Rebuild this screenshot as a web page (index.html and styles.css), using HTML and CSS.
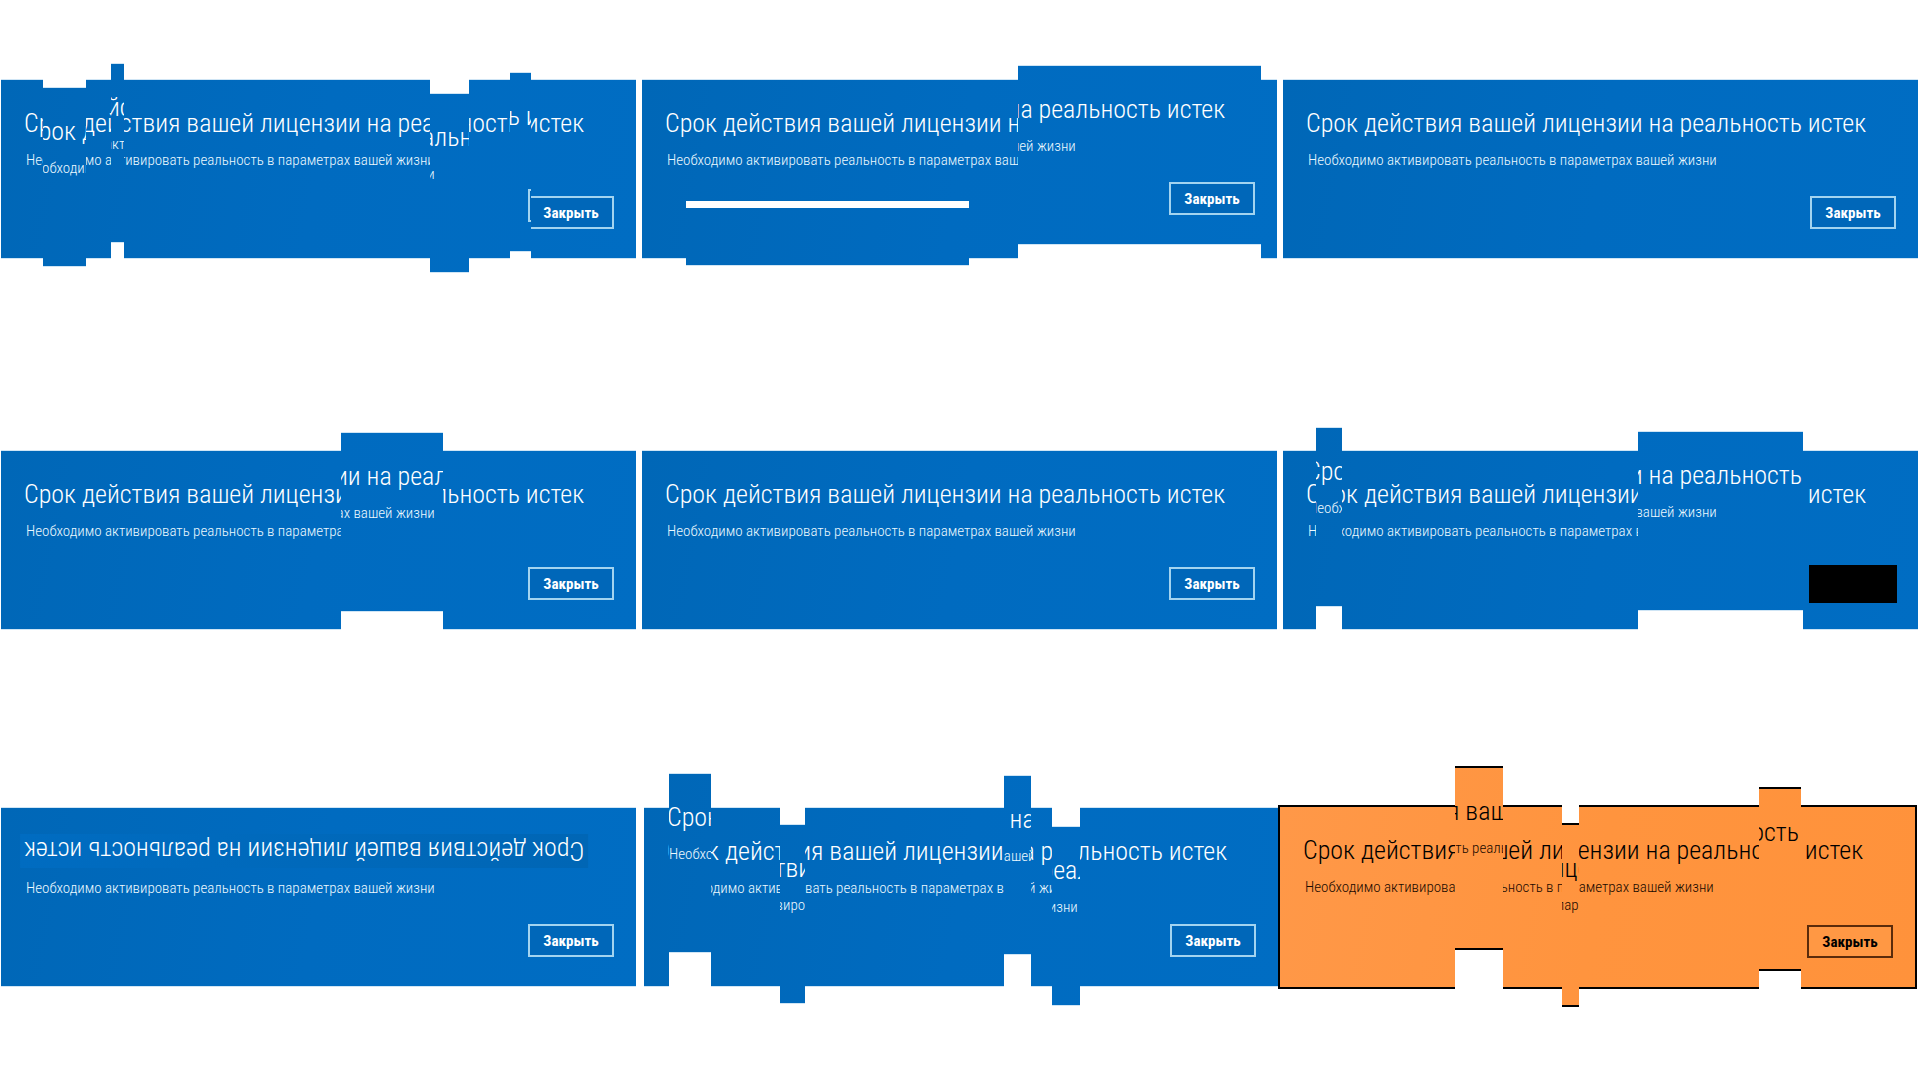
FILE: index.html
```html
<!DOCTYPE html>
<html lang="ru">
<head>
<meta charset="utf-8">
<title>Срок действия вашей лицензии на реальность истек</title>
<link rel="stylesheet" href="styles.css">
</head>
<body>
<main class="wall">
  <section class="row">
    <div class="dialog" data-slices="42,85,8 110,123,-16 429,468,14 509,530,-7">
      <article class="card"><h2 class="title">Срок действия вашей лицензии на реальность истек</h2><p class="note">Необходимо активировать реальность в параметрах вашей жизни</p><button class="close" type="button">Закрыть</button></article>
    </div>
    <div class="dialog" data-slices="44,327,7,122 376,619,-14">
      <article class="card"><h2 class="title">Срок действия вашей лицензии на реальность истек</h2><p class="note">Необходимо активировать реальность в параметрах вашей жизни</p><button class="close" type="button">Закрыть</button></article>
    </div>
    <div class="dialog">
      <article class="card"><h2 class="title">Срок действия вашей лицензии на реальность истек</h2><p class="note">Необходимо активировать реальность в параметрах вашей жизни</p><button class="close" type="button">Закрыть</button></article>
    </div>
  </section>
  <section class="row">
    <div class="dialog" data-slices="340,442,-18">
      <article class="card"><h2 class="title">Срок действия вашей лицензии на реальность истек</h2><p class="note">Необходимо активировать реальность в параметрах вашей жизни</p><button class="close" type="button">Закрыть</button></article>
    </div>
    <div class="dialog">
      <article class="card"><h2 class="title">Срок действия вашей лицензии на реальность истек</h2><p class="note">Необходимо активировать реальность в параметрах вашей жизни</p><button class="close" type="button">Закрыть</button></article>
    </div>
    <div class="dialog" data-slices="33,59,-23 355,520,-19">
      <article class="card"><h2 class="title">Срок действия вашей лицензии на реальность истек</h2><p class="note">Необходимо активировать реальность в параметрах вашей жизни</p><button class="close blackout" type="button" aria-label="Закрыть"></button></article>
    </div>
  </section>
  <section class="row row-last">
    <div class="dialog">
      <article class="card"><h2 class="title upside-down">Срок действия вашей лицензии на реальность истек</h2><p class="note">Необходимо активировать реальность в параметрах вашей жизни</p><button class="close" type="button">Закрыть</button></article>
    </div>
    <div class="dialog" data-slices="25,67,-34 136,161,17 360,387,-32 408,436,19">
      <article class="card"><h2 class="title">Срок действия вашей лицензии на реальность истек</h2><p class="note">Необходимо активировать реальность в параметрах вашей жизни</p><button class="close" type="button">Закрыть</button></article>
    </div>
    <div class="dialog" data-slices="177,225,-39 284,301,18 481,523,-18">
      <article class="card inverted"><h2 class="title">Срок действия вашей лицензии на реальность истек</h2><p class="note">Необходимо активировать реальность в параметрах вашей жизни</p><button class="close" type="button">Закрыть</button></article>
    </div>
  </section>
</main>
<script src="slices.js"></script>
</body>
</html>
```
FILE: styles.css
```css
* { box-sizing: border-box; }

body {
  margin: 0;
  background: #fff;
  font-family: "Roboto Condensed", "Liberation Sans Narrow", "Liberation Sans", sans-serif;
}

.wall {
  display: flex;
  flex-direction: column;
  padding: 79px 2px 80px 1px;
}

.row {
  display: grid;
  grid-template-columns: repeat(3, minmax(0, 1fr));
  gap: 6px;
  align-items: center;
  margin-bottom: 191px;
}

.row:nth-child(2) { margin-bottom: 175px; }

.row-last {
  grid-template-columns: minmax(0, 643fr) minmax(0, 634fr) minmax(0, 639fr);
  gap: 0;
  margin-right: 1px;
  margin-bottom: 0;
}

.row-last .dialog:first-child { margin-right: 8px; }

.dialog { position: relative; }

.card {
  display: flex;
  flex-direction: column;
  align-items: flex-start;
  min-height: 180px;
  padding: 26px 22px 29px 19px;
  border: solid #cfe5f5;
  border-width: 1px 0;
  background: linear-gradient(100deg, #0067b7, #006bc0 50%, #006dc3);
  color: #fff;
}

.title {
  margin: 0;
  padding: 0 4px;
  font-size: 26px;
  font-weight: 300;
  line-height: 34px;
  white-space: nowrap;
}

.note {
  margin: 11px 0 0;
  padding: 0 6px;
  font-size: 15px;
  font-weight: 300;
  line-height: 18px;
  color: #ecf9ff;
  white-space: nowrap;
}

.close {
  width: 86px;
  height: 33px;
  margin: auto 0 0 auto;
  padding: 0;
  border: 2px solid #a3d4f0;
  background: #0067b9;
  color: #fff;
  font-family: inherit;
  font-size: 15px;
  font-weight: 700;
}

.blackout {
  width: 88px;
  height: 38px;
  margin: auto -1px -3px auto;
  border: 0;
  background: #000;
}

.upside-down {
  background: linear-gradient(100deg, #0066b5, #006cc1);
  transform: rotate(180deg);
}

.inverted {
  min-height: 184px;
  border: 2px solid #000;
  background: linear-gradient(100deg, #ff9848, #ff943e 50%, #ff923b);
  color: #000;
}

.inverted .note { color: #1a0a00; }

.inverted .close {
  border-color: #5a2b0b;
  background: #ff9844;
  color: #000;
}

/* A slice hides its column of the card and shows it again, moved up or down. */
.slice {
  position: absolute;
  inset: -60px 0;
  padding-top: calc(60px + var(--shift));
  background: #fff;
  clip-path: inset(var(--top) calc(100% - var(--to)) 0 var(--from));
  pointer-events: none;
}

.slice .card { clip-path: inset(var(--cut) 0 0 0); }
```
FILE: slices.js
```js
// data-slices: "from,to,shift[,cut]" in pixels of the card, separated by spaces.
// With a cut, only the part of the card below that height is moved.
document.querySelectorAll('.dialog[data-slices]').forEach(function (dialog) {
  var card = dialog.querySelector('.card');
  var button = card.querySelector('.close');
  dialog.dataset.slices.split(' ').forEach(function (item) {
    var v = item.split(',').map(Number);
    var cut = v[3] || 0;
    var slice = document.createElement('div');
    slice.className = 'slice';
    slice.setAttribute('aria-hidden', 'true');
    slice.inert = true;
    slice.style.setProperty('--from', v[0] + 'px');
    slice.style.setProperty('--to', v[1] + 'px');
    slice.style.setProperty('--shift', v[2] + 'px');
    slice.style.setProperty('--cut', cut + 'px');
    slice.style.setProperty('--top', (cut ? cut + 60 : 0) + 'px');
    var copy = card.cloneNode(true);
    if (v[1] <= button.offsetLeft) {
      copy.querySelector('.close').remove();
    }
    if (cut) {
      copy.querySelector('.title').remove();
      copy.querySelector('.note').remove();
    }
    slice.appendChild(copy);
    dialog.appendChild(slice);
  });
});
```
